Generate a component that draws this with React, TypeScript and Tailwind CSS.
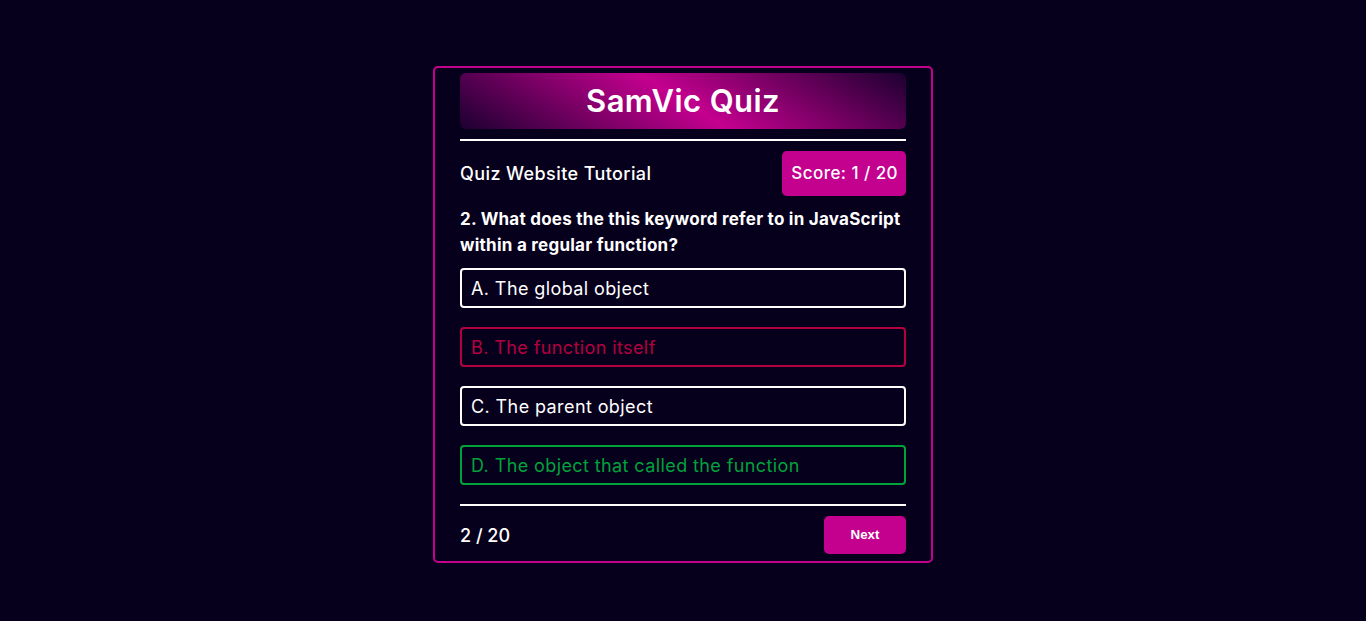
const options = [
  { label: "A. The global object", state: "idle" },
  { label: "B. The function itself", state: "wrong" },
  { label: "C. The parent object", state: "idle" },
  { label: "D. The object that called the function", state: "right" },
]

const optionClass: Record<string, string> = {
  idle: "border-white text-white",
  wrong: "border-[#b3003f] text-[#b3003f]",
  right: "border-[#00a33a] text-[#00a33a]",
}

export default function App() {
  return (
    <div className="min-h-screen bg-[#07001d] flex justify-center pt-[66px] font-['Inter','Noto_Sans',sans-serif] text-white">
      <div className="w-[500px] h-[497px] border-2 border-[#c4008f] rounded-[5px] px-[25px] pt-[5px] flex flex-col">
        {/* header */}
        <div className="h-[56px] rounded-[6px] bg-[linear-gradient(32deg,#1c0030_0%,#c4008f_50%,#1c0030_100%)] flex items-center justify-center">
          <h1 className="text-[31px] font-semibold tracking-[0.4px]">SamVic Quiz</h1>
        </div>
        <div className="h-[2px] bg-white mt-[10px]" />

        <div className="flex items-center justify-between mt-[10px]">
          <span className="text-[18px] font-medium tracking-[0.4px]">Quiz Website Tutorial</span>
          <span className="h-[45px] pl-[9px] pr-[8px] flex items-center rounded-[5px] bg-[#c4008f] text-[17px] font-medium tracking-[0.45px]">Score: 1 / 20</span>
        </div>

        <p className="mt-[10px] text-[17px] font-bold leading-[26px] tracking-[0.25px]">
          2. What does the this keyword refer to in JavaScript within a regular function?
        </p>

        {/* options */}
        <div className="mt-[10px] flex flex-col gap-[19px]">
          {options.map(o => (
            <div key={o.label} className={`h-[40px] border-2 rounded-[4px] px-[9px] flex items-center text-[18px] tracking-[0.4px] ${optionClass[o.state]}`}>
              {o.label}
            </div>
          ))}
        </div>

        <div className="h-[2px] bg-white mt-[19px]" />

        <div className="flex items-center justify-between mt-[10px]">
          <span className="text-[18px] font-medium">2 / 20</span>
          <button className="w-[82px] h-[38px] rounded-[5px] bg-[#c4008f] text-white text-[13.33px] font-bold font-['Liberation_Sans',Arial,sans-serif]">Next</button>
        </div>
      </div>
    </div>
  )
}
